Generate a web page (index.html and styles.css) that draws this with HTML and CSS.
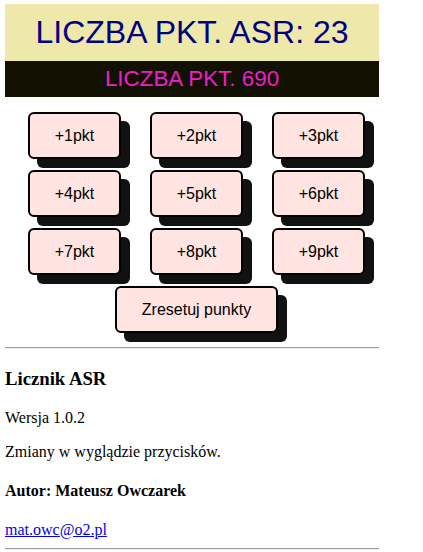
FILE: index.html
```html
<!DOCTYPE html>
<html lang="pl">
<head>
<meta charset="utf-8">
<title>Licznik ASR</title>
<link rel="stylesheet" href="styles.css">
</head>
<body>
<div class="page">
  <h1 class="title">LICZBA PKT. ASR: 23</h1>
  <h2 class="subtitle">LICZBA PKT. 690</h2>
  <div class="buttons">
    <div class="grid">
      <button class="btn">+1pkt</button>
      <button class="btn">+2pkt</button>
      <button class="btn">+3pkt</button>
      <button class="btn">+4pkt</button>
      <button class="btn">+5pkt</button>
      <button class="btn">+6pkt</button>
      <button class="btn">+7pkt</button>
      <button class="btn">+8pkt</button>
      <button class="btn">+9pkt</button>
    </div>
    <button class="btn reset">Zresetuj punkty</button>
  </div>
  <hr class="rule top-rule">
  <h3 class="app-name">Licznik ASR</h3>
  <p class="text">Wersja 1.0.2</p>
  <p class="text">Zmiany w wyglądzie przycisków.</p>
  <h4 class="author">Autor: Mateusz Owczarek</h4>
  <div class="mail"><a href="mailto:mat.owc@o2.pl">mat.owc@o2.pl</a></div>
  <hr class="rule bottom-rule">
</div>
</body>
</html>
```
FILE: styles.css
```css
html, body {
  margin: 0;
  padding: 0;
  background: #ffffff;
}
body {
  padding: 4px 5px 0 5px;
  font-family: "Liberation Serif", "Times New Roman", serif;
  font-size: 16px;
  color: #000;
}
.page {
  width: 374px;
}
.title {
  margin: 0;
  height: 57px;
  line-height: 57px;
  background: #eee8aa;
  color: #000080;
  font-family: "Liberation Sans", Arial, sans-serif;
  font-weight: normal;
  font-size: 32px;
  text-align: center;
}
.subtitle {
  margin: 0;
  height: 36px;
  line-height: 36px;
  background: #121000;
  color: #ee1ecc;
  font-family: "Liberation Sans", Arial, sans-serif;
  font-weight: normal;
  font-size: 22.4px;
  text-align: center;
}
.buttons {
  padding: 15px 0 0 9px;
  display: flex;
  flex-direction: column;
  align-items: center;
  row-gap: 11px;
}
.grid {
  display: grid;
  grid-template-columns: repeat(3, 93px);
  grid-auto-rows: 47px;
  column-gap: 29px;
  row-gap: 11px;
}
.btn {
  box-sizing: border-box;
  margin: 0;
  padding: 0;
  height: 47px;
  background: #ffe4e1;
  border: 2px solid #000;
  border-radius: 6px;
  box-shadow: 9px 9px 0 #111;
  font-family: "Liberation Sans", Arial, sans-serif;
  font-size: 16px;
  color: #000;
  cursor: pointer;
}
.reset {
  width: 163px;
}
.rule {
  border: 0;
  border-top: 1px solid #9a9a9a;
  border-bottom: 1px solid #eeeeee;
  height: 0;
}
.top-rule {
  margin: 14px 0 0 0;
}
.app-name {
  font-size: 18.72px;
  font-weight: bold;
  margin: 19px 0 19px 0;
}
.text {
  margin: 16px 0;
}
.author {
  font-size: 16px;
  font-weight: bold;
  margin: 21px 0;
}
.mail a {
  color: #0000ee;
}
.bottom-rule {
  margin: 9px 0 0 0;
}
```
